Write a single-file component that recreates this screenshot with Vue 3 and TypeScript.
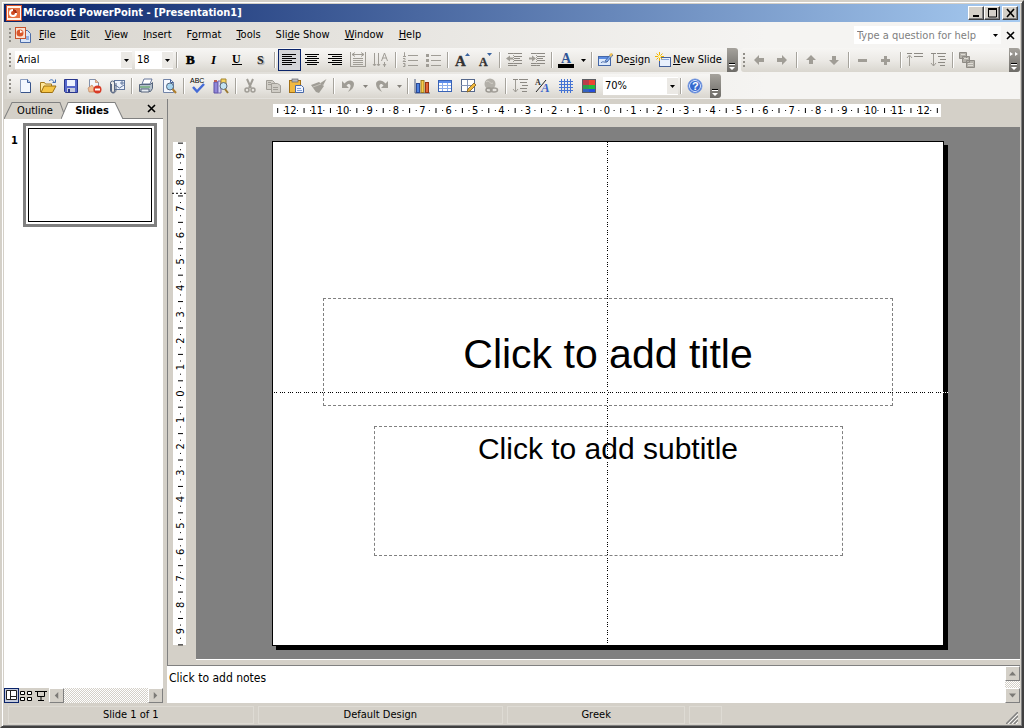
<script setup lang="ts">
import { ref } from 'vue'

interface Tool {
  kind: 'btn' | 'sep' | 'drop' | 'select' | 'text'
  icon?: string
  label?: string
  before?: string
  key?: string
  after?: string
  on?: boolean
  size?: string
  options?: string[]
}

const G = '#a09d96'
const lines = (xs: number[][], c: string) =>
  xs.map(([x, y, w]) => `<rect x="${x}" y="${y}" width="${w}" height="1" fill="${c}"/>`).join('')
const letter = (t: string, x: number, y: number, s: number, extra = '') =>
  `<text x="${x}" y="${y}" font-family="Liberation Serif, serif" font-weight="bold" font-size="${s}" ${extra}>${t}</text>`

const icons: Record<string, string> = {
  bold: letter('B', 3, 12, 13, 'stroke="#000" stroke-width=".6"'),
  italic: letter('I', 5, 12, 13, 'font-style="italic"'),
  underline: letter('U', 3, 11, 12) + '<rect x="3" y="12" width="10" height="1"/>',
  shadow: letter('S', 6, 13, 12, 'fill="#aaa" stroke="#bbb" stroke-width=".6"') + letter('S', 5, 12, 12, 'fill="#222"'),
  left: lines([[1, 2, 14], [1, 4, 10], [1, 6, 14], [1, 8, 10], [1, 10, 14], [1, 12, 10]], '#000'),
  center: lines([[1, 2, 14], [3, 4, 10], [1, 6, 14], [3, 8, 10], [1, 10, 14], [3, 12, 10]], '#000'),
  right: lines([[1, 2, 14], [5, 4, 10], [1, 6, 14], [5, 8, 10], [1, 10, 14], [5, 12, 10]], '#000'),
  distribute:
    lines([[3, 6, 10], [3, 8, 10], [3, 10, 10], [3, 12, 10], [0, 14, 16]], G) +
    `<path d="M.5 0v15M15.5 0v15M2 2.500h12M5 .5l-3 2 3 2M11 .5l3 2-3 2" stroke="${G}" fill="none"/>`,
  textdir: `<path d="M1.500 1v12M5.500 1v12M11.500 10v5M0 12l1.500 2L3 12M4 12l1.500 2L7 12M10 12l1.500 2 1.500-2M8.500 9l3-8 3 8M9.500 6h4" stroke="${G}" fill="none"/>`,
  numbers:
    lines([[6, 3, 10], [6, 8, 10], [6, 13, 10]], G) +
    `<path d="M2 .5h.5v4M1 4.500h3M1 6.500h2v1l-2 2h3M1 11.500h2v3H1M2 13h1" stroke="${G}" fill="none"/>`,
  bullets:
    lines([[6, 3, 10], [6, 8, 10], [6, 13, 10]], G) +
    `<path d="M1 2h3v3H1zM1 7h3v3H1zM1 12h3v3H1z" fill="${G}"/>`,
  grow: letter('A', 1, 14, 15, 'fill="#333" stroke="#333" stroke-width=".3"') + '<path d="M11 4h5l-2.500-3z" fill="#39639f"/>',
  shrink: letter('A', 2, 14, 12, 'fill="#333" stroke="#333" stroke-width=".3"') + '<path d="M10 1h5l-2.500 3z" fill="#39639f"/>',
  outdent:
    lines([[2, 1, 14], [8, 4, 8], [8, 6, 6], [8, 8, 8], [2, 11, 14], [2, 13, 9]], '#8d8a84') +
    `<path d="M0 6.500l4-3v2h3v2H4v2z" fill="${G}"/><path d="M7.500 1v14" stroke="${G}" stroke-dasharray="1"/>`,
  indent:
    lines([[2, 1, 14], [8, 4, 8], [8, 6, 6], [8, 8, 8], [2, 11, 14], [2, 13, 9]], '#8d8a84') +
    `<path d="M7 6.500l-4-3v2H0v2h3v2z" fill="${G}"/><path d="M7.500 1v14" stroke="${G}" stroke-dasharray="1"/>`,
  color: letter('A', 3, 11, 14, 'fill="#2f5597"') + '<rect y="12" width="16" height="4"/>',
  design:
    '<rect x="1.500" y="4.500" width="12" height="9" fill="#dce9fb" stroke="#4467a8"/><rect x="2" y="5" width="11" height="2" fill="#5b8be0"/><path d="M4 11c2-3 4 1 7-2" stroke="#4467a8" fill="none"/><path d="M8 9l6-7 2 1-6 7z" fill="#7fa9ec" stroke="#35538c" stroke-width=".7"/><path d="M12 3l2-2 2 1-2 3z" fill="#eebf55"/>',
  newslide:
    '<rect x="4.500" y="5.500" width="11" height="9" fill="#e8f0fd" stroke="#45629c"/><rect x="6" y="7" width="8" height="1" fill="#88a8e0"/><path d="M4.500 0v9M0 4.500h9M1.500 1.500l6 6M7.500 1.500l-6 6" stroke="#f3b400"/><circle cx="4.500" cy="4.500" r="1.500" fill="#fff7b0"/>',
  new: '<path d="M3.500 1.500h7l3 3v10h-10z" fill="#f4f8ff" stroke="#8b9dbf"/><path d="M10.500 1.500v3h3" fill="#b7cdf2" stroke="#43619b"/><path d="M4 14.500h9.500V5" stroke="#38548a" fill="none"/>',
  open: '<path d="M.5 14V4.500h4l1 1.500h6v3" fill="#ffe69a" stroke="#a67b1d"/><path d="M1 14.500L4 8h12l-3.500 6.500z" fill="#f6c545" stroke="#9c7012"/><path d="M9 3c2-2 4-1.500 5 1M15.500 1.500v3h-3" stroke="#3d6cb5" fill="none"/>',
  save: '<path d="M1.500 1.500h13v13h-12l-1-1z" fill="#5768cb" stroke="#28368c"/><rect x="4" y="2" width="8" height="6" fill="#eef2ff"/><rect x="4" y="10" width="8" height="4" fill="#c7cbdd"/><rect x="5" y="11" width="2" height="3" fill="#28368c"/>',
  permission:
    '<path d="M3.500 1.500h6l3 3v9h-9z" fill="#f4f8ff" stroke="#8190ab"/><path d="M9.500 1.500v3h3M2 10l4-3 2 3v4H3z" fill="#f3bd94" stroke="#b7794f" stroke-width=".6"/><circle cx="11.500" cy="11.500" r="4" fill="#d83b26"/><rect x="9" y="10.500" width="5" height="2" fill="#fff"/>',
  mail: '<rect x="5.500" y="2.500" width="10" height="9" fill="#edf2fc" stroke="#61769c"/><path d="M6 7l4.500 3L15 7M12 4h2v2h-2z" stroke="#61769c" fill="none"/><path d="M1.500 12V5a2 2 0 0 1 4 0v8a1.500 1.500 0 0 1-3 0V6M1.500 12c0 4 5.500 4 5.500 0V5" stroke="#596783" fill="none"/>',
  print:
    '<path d="M4 6l2-5h8l-2 5z" fill="#fff" stroke="#66779b"/><path d="M1.500 6.500h11l2-2v6l-2 3h-11z" fill="#b5c0cc" stroke="#56657c"/><path d="M2 9h10" stroke="#53a653"/><path d="M3 11h8v3H3z" fill="#e9eef4" stroke="#56657c"/>',
  preview:
    '<path d="M2.500 1.500h7l3 3v10h-10z" fill="#f4f8ff" stroke="#7183a7"/><path d="M9.500 1.500v3h3" fill="none" stroke="#43619b"/><circle cx="9" cy="8.500" r="3.500" fill="#a6d4ef" stroke="#51647c"/><path d="M11.500 11l3.500 4" stroke="#b07f2e" stroke-width="2"/>',
  spell:
    '<path d="M3 9l4 4.500L14 6" stroke="#456bd6" stroke-width="2.500" fill="none"/><text x="0" y="5" font-family="Liberation Sans, sans-serif" font-size="7">ABC</text>',
  research:
    '<path d="M1 4h4v11H1z" fill="#9186d8" stroke="#5c50a4"/><path d="M5 3h3v12H5z" fill="#d6d5f3" stroke="#7469b6"/><path d="M1 2h3v2H1z" fill="#bd5f55"/><path d="M8 1h5v5H8z" fill="#f6d35f" stroke="#a38633"/><circle cx="10.500" cy="8" r="3.500" fill="#c3e3f3" stroke="#5d6875"/><path d="M12 11l3 4" stroke="#9b7a34" stroke-width="2"/>',
  cut: `<path d="M5 1l4 9M11 1L7 10" stroke="${G}" stroke-width="2"/><circle cx="5" cy="12" r="2" stroke="${G}" stroke-width="1.500" fill="none"/><circle cx="11" cy="12" r="2" stroke="${G}" stroke-width="1.500" fill="none"/>`,
  copy: `<path d="M1.500 2.500h6l2 2v7h-8z" fill="#d0cdc6" stroke="${G}"/><path d="M6.500 5.500h6l3 2v7h-9z" fill="#d0cdc6" stroke="${G}"/><path d="M8 9.500h5M8 11.500h5M3 4.500h3M3 6.500h3" stroke="${G}"/>`,
  paste:
    '<rect x="1.500" y="2.500" width="11" height="12" fill="#f0b840" stroke="#a26f13"/><rect x="4" y="1" width="6" height="3" fill="#b8b8bd" stroke="#62636b" stroke-width=".7"/><path d="M7.500 7.500h6l2 2v5h-8z" fill="#eef4ff" stroke="#4969a8"/><path d="M9 10.500h4M9 12.500h5" stroke="#7f9fd9"/>',
  painter: `<path d="M15.500 1l-6 4 2.500 2.500zM0 7l8-3 5 4-5 7-3-1z" fill="${G}"/><path d="M2 9l8-3" stroke="#c7c4bc"/>`,
  undo: `<path d="M2 3v7h7L6.500 7.500C8 5 11 5.500 10.500 8.500 10 11 9 12.500 8 14c4-2 6-5 6-8 0-4-6-5-9.500-.5z" fill="${G}"/>`,
  redo: `<path d="M14 3v7H7l2.500-2.500C8 5 5 5.500 5.500 8.500 6 11 7 12.500 8 14 4 12 2 9 2 6c0-4 6-5 9.500-.5z" fill="${G}"/>`,
  chart:
    '<path d="M1 1v14h15" stroke="#4f5f82" fill="none"/><rect x="2.500" y="5.500" width="3" height="9" fill="#4f82e0" stroke="#2a4a96"/><rect x="7" y="2.500" width="3" height="12" fill="#f7ca48" stroke="#9b7a1d"/><rect x="11.500" y="4.500" width="3" height="10" fill="#e56639" stroke="#963412"/>',
  table:
    '<rect x="1.500" y="2.500" width="13" height="11" fill="#fff" stroke="#3862b5"/><rect x="2" y="3" width="12" height="2" fill="#5a8bea"/><path d="M2 7.500h12M2 10.500h12M5.500 5v8M10.500 5v8" stroke="#8badea"/>',
  tables:
    '<rect x="1.500" y="1.500" width="13" height="12" fill="#fff" stroke="#56688c"/><path d="M1 7.500h14M7.500 2v12" stroke="#8495b8"/><path d="M7 14l1-3 6-6 2 2-6 6z" fill="#efb83f" stroke="#7f5c1c" stroke-width=".8"/>',
  link: `<circle cx="7" cy="6" r="5.500" fill="#b3b0a9"/><path d="M3 4c3-3 4 3 7 1" stroke="#d2cfc8" fill="none"/><ellipse cx="6" cy="12" rx="3" ry="2" fill="none" stroke="#9b9892" stroke-width="1.500"/><ellipse cx="11" cy="12" rx="3.500" ry="2" fill="none" stroke="${G}" stroke-width="1.500"/>`,
  expand:
    lines([[1, 1, 5], [7, 1, 9], [8, 4, 7], [10, 7, 6], [8, 10, 7], [10, 13, 5]], '#8d8a84') +
    `<path d="M3.500 2v12M1 11l2.500 3L6 11" stroke="${G}" fill="none"/>`,
  format:
    letter('A', 0, 7, 8, 'fill="#333"') +
    letter('A', 6, 14, 13, 'font-style="italic" fill="#3d65c9"') +
    '<path d="M1 14L11 2" stroke="#222"/>',
  grid: '<path d="M3.500 1v14M6.500 1v14M9.500 1v14M12.500 1v14M1 3.500h14M1 6.500h14M1 9.500h14M1 12.500h14" stroke="#4674d4"/>',
  scheme:
    '<rect x="1" y="1" width="14" height="14" fill="#5b5e63"/><path d="M2 2h6v5H2z" fill="#ba3e4a"/><path d="M8 2h6v5H8z" fill="#ef4530"/><path d="M2 7h6v4H2z" fill="#2c9f50"/><path d="M8 7h6v4H8z" fill="#23bd3a"/><path d="M2 11h6v3H2z" fill="#3562bf"/><path d="M8 11h6v3H8z" fill="#264edc"/>',
  help: '<circle cx="8" cy="8" r="7" fill="#3769cf" stroke="#7c9de0"/><circle cx="8" cy="8" r="5.500" fill="none" stroke="#dbe7ff"/><text x="5" y="12" font-family="Liberation Sans, sans-serif" font-size="11" font-weight="bold" fill="#fff">?</text>',
  west: `<path d="M3 8l5-5v3h5v4H8v3z" fill="${G}"/>`,
  east: `<path d="M13 8L8 3v3H3v4h5v3z" fill="${G}"/>`,
  north: `<path d="M8 3L3 8h3v4h4V8h3z" fill="${G}"/>`,
  south: `<path d="M8 13L3 8h3V4h4v4h3z" fill="${G}"/>`,
  minus: `<rect x="3" y="7" width="9" height="3" fill="${G}"/>`,
  plus: `<path d="M3 7h3V4h3v3h3v3H9v3H6v-3H3z" fill="${G}"/>`,
  collapse:
    lines([[0, 1, 5], [7, 1, 9], [7, 4, 9]], '#8d8a84') +
    `<path d="M2.500 14V4M0 6l2.500-3L5 6" stroke="${G}" fill="none"/>`,
  summary: `<path d="M.5.5h7v6h-7zM3.500 4.500h7v6h-7zM7.500 8.500h8v7h-8z" fill="#b3b0a9" stroke="#8e8b85"/><path d="M2 2.500h4M5 6.500h4M9 11.500h5M9 13.500h5" stroke="#dedbd4"/>`,
}

const b = (icon: string, label: string, on = false): Tool => ({ kind: 'btn', icon, label, on })
const sep: Tool = { kind: 'sep' }
const drop = (label: string): Tool => ({ kind: 'drop', label })

const formatting: Tool[] = [
  { kind: 'select', label: 'Font', size: 'font', options: ['Arial', 'Tahoma'] },
  { kind: 'select', label: 'Font size', size: 'points', options: ['18', '24'] },
  sep, b('bold', 'Bold'), b('italic', 'Italic'), b('underline', 'Underline'), b('shadow', 'Shadow'),
  sep, b('left', 'Align left', true), b('center', 'Center'), b('right', 'Align right'), b('distribute', 'Distributed'), b('textdir', 'Text direction'),
  sep, b('numbers', 'Numbering'), b('bullets', 'Bullets'),
  sep, b('grow', 'Increase font size'), b('shrink', 'Decrease font size'),
  sep, b('outdent', 'Decrease indent'), b('indent', 'Increase indent'),
  sep, b('color', 'Font color'), drop('Font color options'),
  sep,
  { kind: 'text', icon: 'design', before: 'De', key: 's', after: 'ign', size: 'design' },
  { kind: 'text', icon: 'newslide', before: '', key: 'N', after: 'ew Slide', size: 'newslide' },
]
const outlining: Tool[] = [
  b('west', 'Promote'), b('east', 'Demote'), sep,
  b('north', 'Move up'), b('south', 'Move down'), sep,
  b('minus', 'Collapse'), b('plus', 'Expand'), sep,
  b('collapse', 'Collapse all'), b('expand', 'Expand all'), sep,
  b('summary', 'Summary slide'),
]
const standard: Tool[] = [
  b('new', 'New'), b('open', 'Open'), b('save', 'Save'), b('permission', 'Permission'), b('mail', 'E-mail'),
  sep, b('print', 'Print'), b('preview', 'Print preview'),
  sep, b('spell', 'Spelling'), b('research', 'Research'),
  sep, b('cut', 'Cut'), b('copy', 'Copy'), b('paste', 'Paste'), b('painter', 'Format painter'),
  sep, b('undo', 'Undo'), drop('Undo list'), b('redo', 'Redo'), drop('Redo list'),
  sep, b('chart', 'Insert chart'), b('table', 'Insert table'), b('tables', 'Tables and borders'), b('link', 'Insert hyperlink'),
  sep, b('expand', 'Expand all'), b('format', 'Show formatting'), b('grid', 'Show grid'), b('scheme', 'Color'),
  { kind: 'select', label: 'Zoom', size: 'zoom', options: ['70%', '100%'] },
  sep, b('help', 'Help'),
]
const bars = [
  [{ name: 'Formatting', tools: formatting, fill: false }, { name: 'Outlining', tools: outlining, fill: true }],
  [{ name: 'Standard', tools: standard, fill: false }],
]

const menus = [
  ['', 'F', 'ile'], ['', 'E', 'dit'], ['', 'V', 'iew'], ['', 'I', 'nsert'], ['F', 'o', 'rmat'],
  ['', 'T', 'ools'], ['Sli', 'd', 'e Show'], ['', 'W', 'indow'], ['', 'H', 'elp'],
]

interface Mark { at: string; text?: string; tick?: boolean }
function marks(max: number, unit: number): Mark[] {
  const out: Mark[] = []
  for (let q = -max * 4 - 2; q <= max * 4 + 2; q++) {
    const at = 50 + (q / 4) * unit + '%'
    if (q % 4 === 0) out.push({ at, text: String(Math.abs(q / 4)) })
    else out.push({ at, tick: q % 2 === 0 })
  }
  return out
}
const across = marks(12, 3.95)
const down = marks(9, 5.25)

const tab = ref('Slides')
const question = ref('')
const notes = ref('')
const status = [
  { text: 'Slide 1 of 1', grow: 'wide' }, { text: 'Default Design', grow: 'wide' },
  { text: 'Greek', grow: 'mid' }, { text: '', grow: 'tiny' },
]
</script>

<template>
  <div class="window">
    <header class="titlebar">
      <svg class="ic" viewBox="0 0 16 16"><rect x=".5" y=".5" width="15" height="15" fill="#fff4ea" stroke="#d7512a" /><rect x="2" y="3" width="12" height="10" fill="#e8703f" /><circle cx="7" cy="8" r="4" fill="#fff" /><path d="M7 8V4a4 4 0 0 1 4 4z" fill="#a52c10" /><circle cx="7" cy="8" r="2" fill="#cf4a20" /></svg>
      <h1>Microsoft PowerPoint - [Presentation1]</h1>
      <div class="winbtns">
        <button aria-label="Minimize"><svg viewBox="0 0 12 10"><rect x="2" y="7" width="6" height="2" /></svg></button>
        <button aria-label="Maximize"><svg viewBox="0 0 12 10"><path d="M1.500 1v8h8V1z" fill="none" stroke="#000" /><rect x="1" width="9" height="2" /></svg></button>
        <button aria-label="Close" class="close"><svg viewBox="0 0 12 10"><path d="M2 1l7 8M9 1L2 9" stroke="#000" stroke-width="1.600" /></svg></button>
      </div>
    </header>

    <div class="chrome">
      <nav class="menubar">
        <span class="grip"></span>
        <svg class="ic docicon" viewBox="0 0 16 16"><path d="M5.500 3.500h7l3 3v9h-10z" fill="#d9e6fa" stroke="#4c6ca8" /><path d="M11 10h3M11 12h3" stroke="#4c79c9" /><rect x=".5" y=".5" width="10" height="11" fill="#fbe1d2" stroke="#c8532d" /><circle cx="5" cy="6" r="3.500" fill="#d9562b" /><path d="M5 6V3l3 2z" fill="#fff" /></svg>
        <button v-for="m in menus" :key="m.join('')" class="menu">{{ m[0] }}<u>{{ m[1] }}</u>{{ m[2] }}</button>
        <input v-model="question" class="question" aria-label="Type a question for help" placeholder="Type a question for help" />
        <button class="small" aria-label="Recent questions"><svg viewBox="0 0 5 3"><path d="M0 0h5L2.500 3z" /></svg></button>
        <button class="docclose" aria-label="Close presentation"><svg viewBox="0 0 9 9"><path d="M1 1l7 7M8 1L1 8" stroke="#000" stroke-width="1.600" /></svg></button>
      </nav>

      <div v-for="(row, i) in bars" :key="i" class="row">
        <div v-for="bar in row" :key="bar.name" class="toolbar" :class="{ fill: bar.fill }" role="toolbar" :aria-label="bar.name">
          <span class="grip"></span>
          <template v-for="(t, n) in bar.tools" :key="n">
            <span v-if="t.kind === 'sep'" class="sep"></span>
            <button v-else-if="t.kind === 'btn'" class="tool" :class="{ on: t.on }" :aria-label="t.label"><svg class="ic" viewBox="0 0 16 16" v-html="icons[t.icon!]"></svg></button>
            <button v-else-if="t.kind === 'drop'" class="drop" :aria-label="t.label"><svg viewBox="0 0 5 3"><path d="M0 0h5L2.500 3z" :fill="t.label!.startsWith('Font') ? '#000' : '#85827c'" /></svg></button>
            <label v-else-if="t.kind === 'select'" class="combo" :class="t.size">
              <select :aria-label="t.label"><option v-for="o in t.options" :key="o">{{ o }}</option></select>
              <span class="arrow"><svg viewBox="0 0 5 3"><path d="M0 0h5L2.500 3z" /></svg></span>
            </label>
            <button v-else class="texttool" :class="t.size"><svg class="ic" viewBox="0 0 16 16" v-html="icons[t.icon!]"></svg><span>{{ t.before }}<u>{{ t.key }}</u>{{ t.after }}</span></button>
          </template>
          <button class="cap" aria-label="Toolbar options">
            <svg viewBox="0 0 10 22"><path v-if="bar.fill" d="M1 3l3 2-3 2zM6 3l3 2-3 2z" fill="#fff" /><path d="M2 15h6v1H2zM2 18h6l-3 3z" fill="#fff" /><path d="M2 14h6v1H2z" /></svg>
          </button>
        </div>
      </div>
    </div>

    <main class="work">
      <aside class="side">
        <div class="tabs" role="tablist">
          <button role="tab" class="tab" :aria-selected="tab === 'Outline'" @click="tab = 'Outline'">
            <svg viewBox="0 0 62 16" preserveAspectRatio="none"><path d="M0 16L8 .5h48L62 16" /></svg><span>Outline</span>
          </button>
          <button role="tab" class="tab" :aria-selected="tab === 'Slides'" @click="tab = 'Slides'">
            <svg viewBox="0 0 62 16" preserveAspectRatio="none"><path d="M0 16L7 .5h47L62 16" /></svg><span>Slides</span>
          </button>
          <button class="paneclose" aria-label="Close pane"><svg viewBox="0 0 9 9"><path d="M1 1l7 7M8 1L1 8" stroke="#000" stroke-width="1.600" /></svg></button>
        </div>
        <div class="thumbs">
          <span class="num">1</span>
          <button class="thumb" aria-label="Slide 1"><span></span></button>
        </div>
        <div class="views">
          <button class="view on" aria-label="Normal view"><svg viewBox="0 0 13 13"><path d="M1.500 1.500h10v9h-10zM5.500 2v9M6 7.500h5" fill="#fff" stroke="#222" /></svg></button>
          <button class="view" aria-label="Slide sorter view"><svg viewBox="0 0 14 14"><path d="M1.500 2.500h4v3h-4zM8.500 2.500h4v3h-4zM1.500 8.500h4v3h-4zM8.500 8.500h4v3h-4z" fill="#fff" stroke="#000" /></svg></button>
          <button class="view" aria-label="Slide show"><svg viewBox="0 0 14 14"><path d="M1 2.500h12M3.500 3v4.500h7V3M7 8v4M4 11.500h6" fill="none" stroke="#000" /></svg></button>
          <button class="sb" aria-label="Scroll left"><svg viewBox="0 0 4 8"><path d="M4 0v8L0 4z" fill="#7c7a76" /></svg></button>
          <span class="track"></span>
          <button class="sb" aria-label="Scroll right"><svg viewBox="0 0 4 8"><path d="M0 0v8l4-4z" fill="#7c7a76" /></svg></button>
        </div>
      </aside>

      <section class="editor">
        <svg class="hruler">
          <template v-for="(m, i) in across" :key="i">
            <text v-if="m.text" :x="m.at" y="10" text-anchor="middle">{{ m.text }}</text>
            <rect v-else :x="m.at" :y="m.tick ? 4 : 6" width="1" :height="m.tick ? 5 : 1" />
          </template>
        </svg>
        <div class="vside">
          <svg class="vruler">
            <template v-for="(m, i) in down" :key="i">
              <svg v-if="m.text" x="0" :y="m.at" overflow="visible"><text transform="rotate(-90)" x="0" y="11" text-anchor="middle">{{ m.text }}</text></svg>
              <rect v-else :y="m.at" :x="m.tick ? 5 : 7" height="1" :width="m.tick ? 5 : 1" />
            </template>
            <line x1="-1" x2="15" y1="10.2%" y2="10.2%" stroke="#000" stroke-dasharray="2 2" />
          </svg>
        </div>
        <div class="desk">
          <div class="slide">
            <div class="holder title">Click to add title</div>
            <div class="holder subtitle">Click to add subtitle</div>
            <i class="guide v"></i>
            <i class="guide h"></i>
          </div>
        </div>
        <div class="notes">
          <textarea v-model="notes" aria-label="Notes" placeholder="Click to add notes"></textarea>
          <div class="vscroll">
            <button class="sb" aria-label="Scroll up"><svg viewBox="0 0 7 4"><path d="M0 4h7L3.500 0z" fill="#7c7a76" /></svg></button>
            <span class="track"></span>
            <button class="sb" aria-label="Scroll down"><svg viewBox="0 0 7 4"><path d="M0 0h7L3.500 4z" fill="#7c7a76" /></svg></button>
          </div>
        </div>
      </section>
    </main>

    <footer class="status">
      <span v-for="(s, i) in status" :key="i" class="cell" :class="s.grow">{{ s.text }}</span>
      <span class="rest"><svg class="size" viewBox="0 0 12 12"><path d="M0 12L12 0M4 12l8-8M8 12l4-4" stroke="#808080" stroke-width="1.500" /><path d="M2 12L12 2M6 12l6-6M10 12l2-2" stroke="#fff" stroke-width=".8" /></svg></span>
    </footer>
  </div>
</template>

<style>
body {
  margin: 0;
  background: #d4d0c8;
}
</style>

<style scoped>
* {
  box-sizing: border-box;
}
.window {
  display: flex;
  flex-direction: column;
  min-height: 100vh;
  padding: 2px 2px 0;
  border: 2px solid;
  border-color: #d4d0c8 #404040 #404040 #d4d0c8;
  box-shadow: inset 1px 1px #fff, inset -1px -1px #808080;
  background: #d4d0c8;
  color: #000;
  font-family: "DejaVu Sans Condensed", "DejaVu Sans", sans-serif;
  font-size: 11px;
  line-height: 14px;
}
button, input, select, textarea {
  margin: 0;
  padding: 0;
  border: 0;
  border-radius: 0;
  background: none;
  color: inherit;
  font: inherit;
}
svg {
  display: block;
  flex: none;
}
.ic {
  width: 16px;
  height: 16px;
  overflow: visible;
}
.titlebar {
  display: flex;
  align-items: center;
  height: 18px;
  padding: 0 2px;
  background: linear-gradient(90deg, #0a246a, #a6caf0);
}
.titlebar h1 {
  flex: 1;
  margin: 0 0 0 1px;
  color: #fff;
  font-size: 11px;
  font-weight: bold;
}
.winbtns {
  display: flex;
}
.winbtns button {
  width: 16px;
  height: 14px;
  padding: 1px 2px;
  border: 1px solid;
  border-color: #fff #404040 #404040 #fff;
  background: #d4d0c8;
  box-shadow: inset -1px -1px #808080;
}
.winbtns .close {
  margin-left: 2px;
}
.winbtns svg {
  width: 12px;
  height: 10px;
}
.chrome {
  padding: 1px 0 0 3px;
  background: linear-gradient(90deg, #d8d5ce, #f5f4f2 75%);
}
.menubar {
  display: flex;
  align-items: center;
  height: 24px;
  margin-bottom: 1px;
}
.grip {
  flex: none;
  width: 7px;
  height: 16px;
  background: radial-gradient(circle, #918e88 1px, transparent 1px) 1px 0 / 4px 4px repeat-y;
}
.docicon {
  margin: 0 0 0 1px;
}
.menu {
  height: 20px;
  padding: 0 8px 0 7px;
}
.menubar .docicon + .menu {
  margin-left: 1px;
}
.question {
  width: 136px;
  height: 18px;
  margin-left: auto;
  padding: 0 3px;
  background: #fff;
}
.question::placeholder {
  color: #808080;
  opacity: 1;
}
.small {
  display: grid;
  place-items: center;
  width: 11px;
  height: 18px;
  background: #fbfbfa;
}
.small svg,
.drop svg,
.arrow svg {
  width: 5px;
  height: 3px;
}
.docclose,
.paneclose {
  display: grid;
  place-items: center;
  width: 19px;
  height: 17px;
}
.docclose svg,
.paneclose svg {
  width: 9px;
  height: 9px;
}
.row {
  display: flex;
  gap: 3px;
  height: 26px;
}
.row + .row {
  height: 25px;
}
.toolbar {
  display: flex;
  align-items: center;
  height: 24px;
  border-radius: 3px;
  background: linear-gradient(#f7f6f4, #eceae6 50%, #d9d6cf);
}
.fill {
  flex: 1;
}
.sep {
  flex: none;
  width: 6px;
  height: 16px;
  background: linear-gradient(90deg, transparent 2px, #a6a39c 2px 3px, #fff 3px 4px, transparent 4px);
}
.tool {
  display: flex;
  align-items: center;
  flex: none;
  width: 23px;
  height: 22px;
  padding-left: 3px;
}
.tool.on {
  padding-left: 2px;
  border: 1px solid #0a246a;
  background: #d4d5d8;
}
.drop {
  display: grid;
  place-items: center;
  flex: none;
  width: 11px;
  height: 22px;
}
.combo {
  display: grid;
  flex: none;
  height: 18px;
  background: #fff;
}
.combo > * {
  grid-area: 1 / 1;
}
.combo select {
  appearance: none;
  width: 100%;
  padding: 0 2px;
}
.arrow {
  display: grid;
  place-items: center;
  justify-self: end;
  width: 11px;
  margin: 1px 0;
  background: #ebe9e5;
  pointer-events: none;
}
.font {
  width: 117px;
  margin: 0 3px 0 1px;
}
.points {
  width: 38px;
}
.points + .sep {
  margin-left: 1px;
}
.zoom {
  width: 75px;
  margin-left: 2px;
}
.texttool {
  display: flex;
  align-items: center;
  gap: 3px;
  flex: none;
  height: 22px;
  padding-left: 2px;
  white-space: nowrap;
}
.design {
  width: 58px;
}
.newslide {
  gap: 2px;
  width: 74px;
}
.cap {
  flex: none;
  width: 11px;
  height: 24px;
  margin-left: auto;
  border-radius: 0 3px 3px 0;
  background: linear-gradient(#a5a29c, #6e6c68);
}
.cap svg {
  width: 10px;
  height: 22px;
}
.zoom ~ .cap {
  margin-left: 3px;
}
.work {
  display: flex;
  flex: 1;
  min-height: 300px;
}
.side {
  display: flex;
  flex-direction: column;
  flex: none;
  width: 159px;
  background: #fff;
}
.tabs {
  display: flex;
  height: 20px;
  padding-top: 3px;
  border-bottom: 1px solid #808080;
  background: #d4d0c8;
}
.tab {
  position: relative;
  width: 62px;
  height: 17px;
}
.tab + .tab {
  margin-left: -5px;
}
.tab svg {
  position: absolute;
  inset: 0;
  width: 100%;
  height: 100%;
}
.tab path {
  fill: #d4d0c8;
  stroke: #808080;
}
.tab[aria-selected="true"] {
  z-index: 1;
  font-weight: bold;
}
.tab[aria-selected="true"] path {
  fill: #fff;
}
.tab span {
  position: relative;
}
.paneclose {
  margin: -2px 2px 0 auto;
}
.thumbs {
  display: flex;
  flex: 1;
  align-items: flex-start;
  padding: 4px 6px 0 7px;
}
.num {
  width: 12px;
  margin-top: 11px;
  font-weight: bold;
}
.thumb {
  flex: 1;
  height: 104px;
  padding: 2px;
  border: 3px solid #808080;
}
.thumb span {
  display: block;
  height: 100%;
  border: 1px solid #000;
}
.views {
  display: flex;
  height: 15px;
  background: #d4d0c8;
}
.view {
  width: 15px;
  height: 15px;
}
.view.on {
  border: 1px solid #0a246a;
  background: #c5cbdc;
}
.view svg {
  width: 14px;
  height: 14px;
}
.view.on svg {
  width: 13px;
  height: 13px;
}
.sb {
  display: grid;
  place-items: center;
  flex: none;
  width: 15px;
  height: 15px;
  border: 1px solid;
  border-color: #fff #808080 #808080 #fff;
  background: #d4d0c8;
}
.sb svg {
  width: 5px;
  height: 7px;
}
.vscroll .sb svg {
  width: 7px;
  height: 5px;
}
.track {
  flex: 1;
  background: repeating-conic-gradient(#d4d0c8 0 25%, #fff 0 50%) 0 0 / 2px 2px;
}
.editor {
  display: grid;
  flex: 1;
  grid-template: 28px 1fr 43px / 28px 1fr;
  margin-left: 4px;
  border-left: 1px solid #808080;
}
.hruler {
  grid-area: 1 / 2;
  width: calc(100% - 156px);
  height: 13px;
  margin: 5px 0 0 77px;
  background: #fff;
}
.vside {
  grid-area: 2 / 1;
  padding: 15px 0 15px 5px;
}
.vruler {
  width: 13px;
  height: 100%;
  overflow: visible;
  background: #fff;
}
.desk {
  display: flex;
  grid-area: 2 / 2;
  padding: 14px 76px 13px;
  border-bottom: 1px solid #fff;
  background: #808080;
}
.slide {
  position: relative;
  display: flex;
  flex: 1;
  flex-direction: column;
  align-items: center;
  gap: 20px;
  padding-top: 156px;
  border: 1px solid #000;
  background: #fff;
  box-shadow: 4px 4px #000;
  font-family: "Liberation Sans", Arial, sans-serif;
}
.holder {
  border: 1px dashed #808080;
  text-align: center;
}
.title {
  width: 85%;
  height: 108px;
  font-size: 41px;
  line-height: 110px;
}
.subtitle {
  width: 70%;
  height: 130px;
  padding-top: 4px;
  font-size: 30px;
  line-height: 36px;
}
.guide {
  position: absolute;
}
.guide.v {
  top: 0;
  bottom: -1px;
  left: calc(50% - 1px);
  width: 1px;
  background: repeating-linear-gradient(#000 0 1px, transparent 1px 2px, #000 2px 3px, transparent 3px 4px, #000 4px 5px, transparent 5px 8px);
}
.guide.h {
  top: calc(50% - 2px);
  right: -5px;
  left: -1px;
  height: 1px;
  background: repeating-linear-gradient(90deg, #000 0 1px, #fff 1px 2px, #000 2px 3px, #fff 3px 4px, #000 4px 5px, #fff 5px 8px);
}
.notes {
  display: flex;
  grid-area: 3 / 1 / 4 / 3;
  margin-top: 5px;
  margin-left: -1px;
  border-top: 1px solid #808080;
  background: #fff;
}
.notes textarea {
  flex: 1;
  padding: 5px 2px;
  resize: none;
  outline: 0;
  font-size: 12px;
}
.notes textarea::placeholder {
  color: #000;
  opacity: 1;
}
.vscroll {
  display: flex;
  flex-direction: column;
}
.status {
  display: flex;
  align-items: center;
  gap: 4px;
  height: 23px;
  padding-left: 4px;
}
.cell {
  height: 18px;
  border: 1px solid #dedbd4;
  line-height: 15px;
  text-align: center;
}
.wide {
  flex: 246 1 0;
}
.mid {
  flex: 178 1 0;
}
.tiny {
  flex: 31 1 0;
}
.rest {
  flex: 297 1 0;
  align-self: flex-end;
}
.size {
  width: 12px;
  height: 12px;
  margin: 0 2px 2px auto;
}
</style>
